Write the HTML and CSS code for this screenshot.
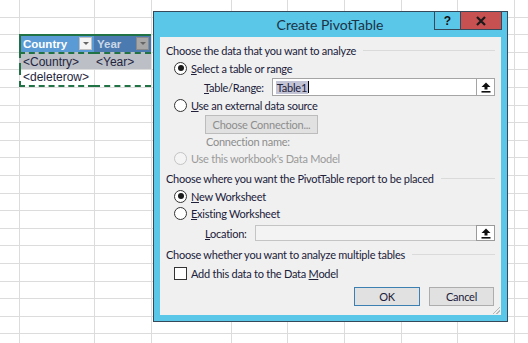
FILE: index.html
```html
<!DOCTYPE html>
<html lang="en">
<head>
    <meta charset="UTF-8">
    <title>Create PivotTable</title>
    <link rel="stylesheet" href="styles.css">
</head>
<body>
    <!-- Worksheet behind the dialog -->
    <div class="sheet">
        <div class="xl-table">
            <div class="th th-country">Country<span class="dd"></span></div>
            <div class="th th-year">Year<span class="dd dd-dark"></span></div>
            <div class="td td-first">&lt;Country&gt;</div>
            <div class="td">&lt;Year&gt;</div>
            <div class="td td-last td-first">&lt;deleterow&gt;</div>
            <div class="td td-last"></div>
        </div>
    </div>

    <!-- Create PivotTable dialog -->
    <div class="dialog">
        <div class="titlebar">
            <div class="title">Create PivotTable</div>
            <div class="caption-buttons">
                <button class="cap-btn help">?</button>
                <button class="cap-btn close">
                    <svg width="12" height="10" viewBox="0 0 12 10"><path d="M2 1 L10 9 M10 1 L2 9" stroke="#1a1a1a" stroke-width="2.2"/></svg>
                </button>
            </div>
        </div>

        <div class="client">
            <div class="section-title">Choose the data that you want to analyze</div>

            <label class="option"><span class="radio checked"></span><span><u>S</u>elect a table or range</span></label>
            <div class="field field-range">
                <span class="field-label"><u>T</u>able/Range:</span>
                <div class="ref-input">
                    <span class="ref-text"><span class="sel">Table1</span><span class="caret"></span></span>
                    <span class="ref-btn">
                        <svg width="12" height="11" viewBox="0 0 12 11"><path d="M6 0.5 L10.5 5 L7.5 5 L7.5 7.5 L4.5 7.5 L4.5 5 L1.5 5 Z" fill="#111"/><rect x="1.5" y="9" width="9" height="1.6" fill="#111"/></svg>
                    </span>
                </div>
            </div>

            <label class="option"><span class="radio"></span><span><u>U</u>se an external data source</span></label>
            <button class="btn btn-disabled">Choose Connection...</button>
            <div class="conn-name">Connection name:</div>
            <label class="option option-disabled"><span class="radio disabled"></span><span>Use this workbook's Data Model</span></label>

            <div class="section-title second">Choose where you want the PivotTable report to be placed</div>
            <label class="option"><span class="radio checked"></span><span><u>N</u>ew Worksheet</span></label>
            <label class="option option-short"><span class="radio"></span><span><u>E</u>xisting Worksheet</span></label>
            <div class="field field-location">
                <span class="field-label"><u>L</u>ocation:</span>
                <div class="ref-input disabled">
                    <span class="ref-text"></span>
                    <span class="ref-btn">
                        <svg width="12" height="11" viewBox="0 0 12 11"><path d="M6 0.5 L10.5 5 L7.5 5 L7.5 7.5 L4.5 7.5 L4.5 5 L1.5 5 Z" fill="#111"/><rect x="1.5" y="9" width="9" height="1.6" fill="#111"/></svg>
                    </span>
                </div>
            </div>

            <div class="section-title third">Choose whether you want to analyze multiple tables</div>
            <label class="option option-check"><span class="checkbox"></span><span>Add this data to the Data <u>M</u>odel</span></label>

            <div class="button-row">
                <button class="btn btn-default">OK</button>
                <button class="btn">Cancel</button>
            </div>

            <span class="grip"></span>
        </div>
    </div>
</body>
</html>
```

FILE: styles.css
```css
body {
    margin: 0;
    padding: 0;
    width: 528px;
    height: 343px;
    overflow: hidden;
    background: #fff;
    font-family: Lato, "Liberation Sans", sans-serif;
    position: relative;
}

/* worksheet grid */
.sheet {
    height: 343px;
    display: grid;
    grid-template-columns: 20px 75px 57px 1fr;
    grid-template-rows: repeat(20, 17.6px);
    background:
        linear-gradient(#dcdcdc, #dcdcdc) 19px 0 / 1px 100% no-repeat,
        linear-gradient(#dcdcdc, #dcdcdc) 94px 0 / 1px 100% no-repeat,
        linear-gradient(#dcdcdc, #dcdcdc) 151px 0 / 1px 100% no-repeat,
        linear-gradient(#dcdcdc, #dcdcdc) 231px 0 / 1px 100% no-repeat,
        linear-gradient(#dcdcdc, #dcdcdc) 287px 0 / 1px 100% no-repeat,
        linear-gradient(#dcdcdc, #dcdcdc) 344px 0 / 1px 100% no-repeat,
        linear-gradient(#dcdcdc, #dcdcdc) 401px 0 / 1px 100% no-repeat,
        linear-gradient(#dcdcdc, #dcdcdc) 457px 0 / 1px 100% no-repeat,
        linear-gradient(#dcdcdc, #dcdcdc) 514px 0 / 1px 100% no-repeat,
        repeating-linear-gradient(to bottom, transparent 0 16.6px, #dcdcdc 16.6px 17.6px);
}
.xl-table {
    grid-column: 2 / 4;
    grid-row: 3 / 6;
    display: grid;
    grid-template-columns: 75px 57px;
    grid-template-rows: repeat(3, 17.6px);
    font-family: "Liberation Sans", Arial, sans-serif;
    font-size: 12px;
    margin: -1px 0 0 -1px;
}
.th {
    display: flex;
    align-items: center;
    justify-content: space-between;
    padding: 0 2px 0 3px;
    font-weight: bold;
    font-size: 11.5px;
    color: #fff;
    border-top: 2px solid #217346;
}
.th-country {
    background: #5b9bd5;
    border-left: 2px solid #217346;
    padding-left: 2px;
}
.th-year {
    background: #4a7ab0;
    color: #c9d6e6;
}
.dd {
    width: 11px;
    height: 11px;
    background: #f4f4f4;
    border: 1px solid #c0c0c0;
    position: relative;
}
.dd::after {
    content: "";
    position: absolute;
    left: 3px;
    top: 4px;
    border-left: 3px solid transparent;
    border-right: 3px solid transparent;
    border-top: 3px solid #666;
}
.dd-dark {
    background: #a7a7a7;
    border-color: #8a8a8a;
}
.td {
    display: flex;
    align-items: center;
    padding-left: 2px;
    background: #bcbfc6;
    color: #1f2540;
    border-top: 2px dashed #217346;
}
.td-first {
    border-left: 2px dashed #217346;
    padding-left: 2px;
}
.td-last {
    background: transparent;
    border-top: none;
    border-bottom: 2px dashed #217346;
}

/* dialog */
.dialog {
    position: absolute;
    left: 153px;
    top: 11px;
    width: 341px;
    height: 303px;
    background: #5ac6e8;
    border: 1px solid #35495a;
    padding: 0 6px 6px;
    display: flex;
    flex-direction: column;
}
.titlebar {
    height: 26px;
    display: flex;
    align-items: flex-start;
    margin: -1px -1px 0 0;
}
.title {
    flex: 1;
    height: 26px;
    line-height: 27px;
    text-align: center;
    padding-left: 66px;
    font-size: 14px;
    color: #1c3346;
}
.caption-buttons {
    display: flex;
}
.cap-btn {
    height: 19px;
    border: 1px solid #35495a;
    padding: 0;
    margin: 0;
    display: flex;
    align-items: center;
    justify-content: center;
    font-family: "Liberation Sans", Arial, sans-serif;
}
.help {
    width: 26px;
    background: #5ac6e8;
    font-weight: bold;
    font-size: 12px;
    color: #111;
    border-right: none;
}
.close {
    width: 42px;
    background: #c75050;
}

.client {
    flex: 1;
    background: #f0f0f0;
    padding: 4px 6px 0;
    font-size: 11px;
    letter-spacing: -0.25px;
    color: #20203a;
    position: relative;
}
.section-title {
    height: 18px;
    display: flex;
    align-items: center;
    gap: 7px;
    white-space: nowrap;
}
.section-title::after {
    content: "";
    flex: 1;
    border-top: 1px solid #dadada;
}
.section-title.second {
    margin-top: 3px;
}
.section-title.third {
    margin-top: 4px;
}
.option {
    height: 18px;
    display: flex;
    align-items: center;
    gap: 4px;
    padding-left: 8px;
}
.option-short {
    height: 17px;
}
.option-check {
    margin-top: 1px;
}
.option-disabled {
    height: 16px;
    color: #9a9a9a;
}
.radio {
    width: 11px;
    height: 11px;
    border: 1px solid #333;
    border-radius: 50%;
    background: #fff;
    position: relative;
    flex: none;
}
.radio.checked::after {
    content: "";
    position: absolute;
    left: 2.5px;
    top: 2.5px;
    width: 6px;
    height: 6px;
    border-radius: 50%;
    background: #1a1a1a;
}
.radio.disabled {
    border-color: #c4c4c4;
    background: #f4f4f4;
}
.checkbox {
    width: 11px;
    height: 11px;
    border: 1px solid #333;
    background: #fff;
    flex: none;
}

.field {
    display: flex;
    align-items: center;
    gap: 8px;
}
.field-range {
    height: 18px;
    margin-top: 1px;
    padding-left: 38px;
}
.field-location {
    height: 16px;
    margin-top: 3px;
    padding-left: 39px;
}
.ref-input {
    flex: 1;
    align-self: stretch;
    display: flex;
    border: 1px solid #a5a5a5;
    background: #fff;
}
.ref-input.disabled {
    background: #f3f3f3;
    border-color: #c4c4c4;
}
.ref-text {
    flex: 1;
    display: flex;
    align-items: center;
    padding-left: 3px;
}
.sel {
    background: #c3c3d6;
    padding: 0 1px;
}
.caret {
    width: 1px;
    height: 12px;
    background: #000;
}
.ref-btn {
    width: 17px;
    border-left: 1px solid #a5a5a5;
    display: flex;
    align-items: center;
    justify-content: center;
    background: #fff;
}
.ref-input.disabled .ref-btn {
    border: 1px solid #9a9a9a;
    margin: -1px -1px -1px 0;
}

.btn {
    height: 19px;
    padding: 0;
    border: 1px solid #adadad;
    background: #e1e1e1;
    font-family: inherit;
    font-size: 11px;
    letter-spacing: inherit;
    color: #20203a;
}
.btn-disabled {
    display: block;
    width: 113px;
    margin: 1px 0 0 39px;
    color: #8d8d8d;
    border-color: #bcbcbc;
}
.conn-name {
    height: 16px;
    line-height: 16px;
    padding-left: 40px;
    color: #8d8d8d;
}
.button-row {
    display: flex;
    justify-content: flex-end;
    gap: 9px;
    margin: 5px 1px 0 0;
}
.button-row .btn {
    width: 65px;
}
.button-row .btn-default {
    border-color: #3c7fb1;
    width: 66px;
}
.grip {
    position: absolute;
    right: 1px;
    bottom: 1px;
    width: 8px;
    height: 8px;
    background: linear-gradient(135deg, transparent 0 55%, #b8b8b8 55% 62%, transparent 62% 75%, #b8b8b8 75% 82%, transparent 82%);
}
```
